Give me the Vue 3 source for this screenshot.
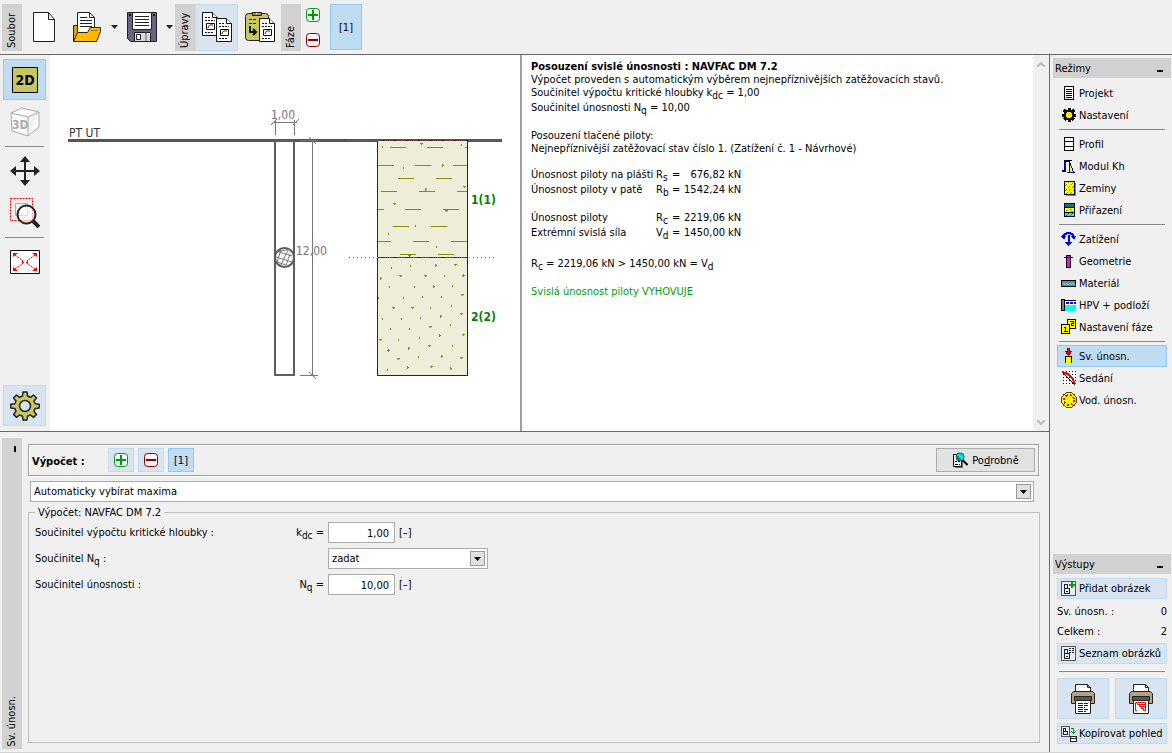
<script setup>
import { ref } from 'vue'

const icons = {
  project: '<path d="M3.500 1.500h9v13h-9z" fill="#fff" stroke="#000"/><path d="M5 4.500h6M5 6.500h6M5 8.500h6M5 10.500h6M5 12.500h6" stroke="#000"/>',
  settings: '<path d="M8 1v14M1 8h14M3 3l10 10M13 3l-10 10" stroke="#111" stroke-width="3"/><circle cx="8" cy="8" r="5" fill="#111"/><circle cx="8" cy="8" r="3" fill="#ffeb00"/>',
  profile: '<path d="M3.500 1.500h9v13h-9zM3 5.500h10M3 10.500h10" fill="#fff" stroke="#000"/>',
  modulus: '<path d="M1 13h3V3h5" fill="none" stroke="#000080" stroke-width="2"/><path d="M5 2.500h6" stroke="#000"/><path d="M8.500 4v10h4z" fill="#ff0" stroke="#000080"/><path d="M6 14.500h8" stroke="#000080"/>',
  soils: '<path d="M5 3h10v13h-10z" fill="#888"/><path d="M3.500 1.500h10v13h-10z" fill="#ff0" stroke="#000"/><path d="M4 6l4-4M4 11l8-8M5 14l8-8M9 14l4-4" stroke="#7d7d00" stroke-dasharray="3 1"/>',
  assign: '<path d="M3 1h11v14h-11z" fill="#000"/><path d="M4 2h9v3h-9z" fill="#008080"/><path d="M4 6h9v4h-9z" fill="#ff0"/><path d="M4 11h9v3h-9z" fill="#0ff"/><path d="M5 8.500h2M9 7.500h2M10 9.500h2" stroke="#a90"/><path d="M5 14l3-3M9 14l3-3M5 5l2-2M9 5l2-2" stroke="#055"/>',
  load: '<path d="M2 6c1-5 10-5 11 0M7.500 4v9" fill="none" stroke="#00f" stroke-width="2"/><path d="M0 5h5l-2 4zM10 5h5l-2 4zM4 11h7l-3.500 4z" fill="#00f"/>',
  geometry: '<path d="M5.500 2.500h4v12h-4z" fill="#f0f" stroke="#000"/><path d="M3 4.500h9" stroke="#000"/>',
  material: '<path d="M.5 5.500h14v6h-14z" fill="#808080" stroke="#000"/><path d="M2 8.500h12M3 9.500h11" stroke="#0ff" stroke-dasharray="2 1"/>',
  water: '<path d="M4 8h11v6h-11z" fill="#0ff"/><path d="M4 5h11v3h-11z" fill="#fff"/><path d="M.5 2.500h3v11h-3z" fill="#808080" stroke="#000"/><path d="M3 3.500h12" stroke="#000"/><path d="M5 6h10" stroke="#00f" stroke-width="2" stroke-dasharray="3 1"/>',
  stage: '<rect x="6.500" y=".5" width="8" height="9" rx="1" fill="#ff0" stroke="#000"/><rect x=".5" y="5.500" width="8" height="9" rx="1" fill="#ff0" stroke="#000"/><path d="M9 2.500h3v2h-2v2h3" fill="none" stroke="#000"/><path d="M3 8.500h1.500v4M3 12.500h4" fill="none" stroke="#000"/>',
  vertical: '<path d="M4.500 15V8.500h6V15" fill="#ff0" stroke="#000"/><path d="M6.500.5h2v3h2l-3 4-3-4h2z" fill="#f00" stroke="#900"/>',
  settlement: '<path d="M1 1h14v14h-14z" fill="#fff"/><path d="M2 1.500h13M2 4.500h13M2 7.500h13M2 10.500h13M2 13.500h13" stroke="#000" stroke-dasharray="1 2"/><path d="M1 2l13 13" stroke="#000"/><path d="M1 2c7 1 11 6 13 12" fill="none" stroke="#f00" stroke-width="2"/>',
  horizontal: '<circle cx="8" cy="8" r="7.500" fill="#ff0" stroke="#554400"/><circle cx="8" cy="8" r="5" fill="none" stroke="#f00" stroke-width="2" stroke-dasharray="2 1.930"/>',
  addPicture: '<path d="M.5.5h14v14h-14z" fill="#e7edf3" stroke="#555"/><path d="M3.500 12.500v-9h3v4h2v5zM3.500 7.500h3M5 10.500h2" fill="none" stroke="#222"/><path d="M11 1v6M8 4h6" stroke="#00a000" stroke-width="2"/>',
  listPictures: '<path d="M.5.5h14v14h-14z" fill="#e7edf3" stroke="#555"/><path d="M3.500 12.500v-9h3v4h2v5zM3.500 7.500h3M5 10.500h2" fill="none" stroke="#222"/><path d="M8 2.500h6M8 4.500h6M8 6.500h6" stroke="#222" stroke-dasharray="2 1"/>',
  copyView: '<path d="M.5.5h8v10h-8z" fill="#e7edf3" stroke="#555"/><path d="M2.500 8.500v-6h2v3h2v3zM2.500 5.500h2" fill="none" stroke="#222"/><path d="M10 2.500h2.500v5M10.500 5.500l2 2 2-2" fill="none" stroke="#00a000"/><path d="M9.500 10.500h6v5h-6zM9 12.500h7" fill="#fff" stroke="#222"/>',
}

const modeGroups = [
  [['project', 'Projekt'], ['settings', 'Nastavení']],
  [['profile', 'Profil'], ['modulus', 'Modul Kh'], ['soils', 'Zeminy'], ['assign', 'Přiřazení']],
  [['load', 'Zatížení'], ['geometry', 'Geometrie'], ['material', 'Materiál'], ['water', 'HPV + podloží'], ['stage', 'Nastavení fáze']],
  [['vertical', 'Sv. únosn.'], ['settlement', 'Sedání'], ['horizontal', 'Vod. únosn.']],
]
const activeMode = ref('vertical')

const kdc = ref('1,00')
const nq = ref('10,00')

// Clay hatch: y, then start/end pairs
const clay = [
  [147, 390, 406, 427, 443, 465, 467], [165, 378, 394, 415, 431, 453, 467],
  [178, 398, 414, 436, 452], [191, 381, 397, 419, 435, 457, 467],
  [209, 378, 384, 405, 421, 443, 459], [226, 393, 409, 431, 447],
  [241, 378, 391, 413, 429, 451, 467], [254, 400, 416, 438, 454],
]
const clayPath = clay.map(([y, ...xs]) => {
  let d = ''
  for (let i = 0; i < xs.length; i += 2) d += `M${xs[i]} ${y + 0.5}H${xs[i + 1]}`
  return d
}).join('')

// Grains: x, y, shape (i = tick, t = wedge, h = side wedge, o = ring)
const grains = [
  [382, 146, 'i'], [421, 143, 't'], [461, 144, 'i'], [403, 167, 'i'], [442, 165, 'h'],
  [425, 189, 'h'], [464, 186, 't'], [394, 203, 't'], [446, 210, 't'], [415, 225, 'i'],
  [388, 233, 'i'], [436, 246, 'i'], [409, 255, 't'],
  [391, 267, 'i'], [410, 265, 'i'], [435, 265, 'h'], [455, 264, 't'],
  [380, 278, 'h'], [400, 275, 't'], [425, 275, 't'], [444, 275, 'i'], [463, 275, 'o'],
  [389, 286, 'i'], [414, 286, 'i'], [433, 286, 'h'], [452, 285, 'i'],
  [378, 297, 'i'], [403, 297, 'i'], [422, 296, 'i'], [441, 296, 'i'], [462, 294, 't'],
  [393, 307, 't'], [412, 307, 't'], [430, 307, 'i'], [451, 305, 'i'], [461, 313, 't'],
  [382, 318, 'i'], [401, 318, 'i'], [420, 317, 'i'], [440, 316, 'h'],
  [390, 328, 'i'], [409, 328, 'i'], [430, 326, 't'], [450, 324, 'i'],
  [380, 339, 't'], [398, 339, 'i'], [419, 337, 'i'], [439, 335, 'h'], [463, 334, 't'],
  [388, 350, 'o'], [408, 348, 'h'], [429, 345, 't'], [452, 345, 'i'],
  [398, 358, 't'], [418, 356, 'i'], [441, 356, 'h'], [461, 357, 't'],
  [387, 369, 'i'], [407, 367, 'h'], [431, 366, 't'], [450, 368, 'h'],
]
const shapes = {
  i: 'h1v2h-1z',
  t: 'm-1 0h3v1h-1v1h-1v-1h-1z',
  h: 'm0 -1h1v1h1v1h-1v1h-1z',
  o: 'm0 -1h1v1h1v1h-1v1h-1v-1h-1v-1h1z',
}
const grainPath = grains.map(([x, y, s]) => `M${x} ${y}${shapes[s]}`).join('')
</script>

<template>
  <div class="app">
    <header class="toolbar">
      <span class="tab">Soubor</span>
      <button class="tool doc" aria-label="Nový">
        <svg width="30" height="30" viewBox="0 0 30 30"><path d="M4.500.5h15l6 7v22h-21z" fill="#fff" stroke="#222" /><path d="M19.500.5v7h6" fill="none" stroke="#222" /></svg>
      </button>
      <button class="tool" aria-label="Otevřít">
        <svg width="30" height="30" viewBox="0 0 30 30">
          <path d="M1.500 29V13.500h5l2 3h14V29z" fill="#e8a200" stroke="#222" />
          <path d="M5.500 21V.5h12l5 5V21z" fill="#fff" stroke="#222" /><path d="M17.500.5v5h5M8 5.500h7M8 8.500h12M8 11.500h12M8 14.500h12" fill="none" stroke="#222" />
          <path d="M1.500 29.500l4-9h10l3-5h10v4l-4 10z" fill="#ffb900" stroke="#222" /><path d="M19 18.500h7" stroke="#a66f00" />
        </svg>
      </button>
      <button class="drop" aria-label="Otevřít – nabídka"><svg width="7" height="4" viewBox="0 0 7 4"><path d="M0 0h7l-3.500 4z" fill="#222" /></svg></button>
      <button class="tool" aria-label="Uložit">
        <svg width="30" height="30" viewBox="0 0 30 30">
          <path d="M.5.5h29v29h-26l-3-3z" fill="#65657f" stroke="#222" />
          <path d="M5.500.5h19v17h-19z" fill="#fff" stroke="#222" /><path d="M8 4.500h14M8 7.500h14M8 10.500h14M8 13.500h14" stroke="#222" />
          <path d="M2 2h2v2h-2zM26 2h2v2h-2z" fill="#111" />
          <path d="M7.500 20.500h16v9h-16z" fill="#d8d8de" stroke="#222" /><path d="M9.500 22.500h4v5h-4z" fill="#fff" stroke="#222" /><path d="M19 21v8" stroke="#666" />
        </svg>
      </button>
      <button class="drop" aria-label="Uložit – nabídka"><svg width="7" height="4" viewBox="0 0 7 4"><path d="M0 0h7l-3.500 4z" fill="#222" /></svg></button>
      <span class="tab">Úpravy</span>
      <button class="tool soft" aria-label="Kopírovat">
        <svg width="30" height="30" viewBox="0 0 30 30">
          <g id="sheet" fill="#fff" stroke="#111">
            <path d="M.5.5h10l5 5v18h-15z" /><path d="M10.500.5v5h5" /><path d="M3 5.500h6M3 8.500h10M3 20.500h9" stroke-dasharray="2 1" /><path d="M4.500 11.500h8v6h-8z" /><path d="M6 16c1-4 3-3 5-3" />
          </g>
          <use href="#sheet" x="14" y="6" />
        </svg>
      </button>
      <button class="tool" aria-label="Vložit">
        <svg width="30" height="30" viewBox="0 0 30 30">
          <path d="M.5 4.500q0-3 3-3h17q3 0 3 3v21q0 3-3 3h-17q-3 0-3-3z" fill="#c8c65e" stroke="#222" />
          <path d="M7.500 3.500v-3h9v3z" fill="#b98550" stroke="#222" /><path d="M11 1h2v1h-2z" fill="#fff" />
          <path d="M4 7.500h8M4 11.500h7" stroke="#222" stroke-dasharray="3 1" /><path d="M5 14v6h5M8 17l3 3-3 3" fill="none" stroke="#111" stroke-width="2" />
          <use href="#sheet" x="14" y="6" />
        </svg>
      </button>
      <span class="tab">Fáze</span>
      <div class="stage-edit">
        <button aria-label="Přidat fázi"><svg width="14" height="14" viewBox="0 0 14 14"><rect x=".5" y=".5" width="13" height="13" rx="3" fill="#f4fbf4" stroke="#009a12" /><path d="M7 2v10M2 7h10" stroke="#009a12" stroke-width="2" /></svg></button>
        <button aria-label="Odebrat fázi"><svg width="14" height="14" viewBox="0 0 14 14"><rect x=".5" y=".5" width="13" height="13" rx="3" fill="#fbf4f4" stroke="#900000" /><path d="M2 7h10" stroke="#900000" stroke-width="2" /></svg></button>
      </div>
      <button class="stage on">[1]</button>
    </header>

    <div class="body">
      <main class="work">
        <section class="view">
          <nav class="side-tools">
            <button class="side on" aria-label="2D"><svg width="26" height="26" viewBox="0 0 26 26"><path d="M.5.500h25v25h-25z" fill="#c8c65e" stroke="#000" /><text x="13" y="18" text-anchor="middle" class="t2d">2D</text></svg></button>
            <button class="side" aria-label="3D"><svg width="30" height="30" viewBox="0 0 30 30"><path d="M1 6l17 4v19L2 24zM1 6l11-5 17 4-11 5M29 5v15l-11 9" fill="#fbfbfb" stroke="#aaa" stroke-linejoin="round" /><text x="2" y="22" class="t3d">3D</text></svg></button>
            <hr />
            <button class="side" aria-label="Posun"><svg width="30" height="30" viewBox="0 0 30 30"><path d="M15 3v24M3 15h24" stroke="#222" stroke-width="2" /><path d="M15 0l5 6h-10zM15 30l5-6h-10zM0 15l6-5v10zM30 15l-6-5v10z" fill="#222" /></svg></button>
            <button class="side" aria-label="Zvětšit výřez"><svg width="30" height="30" viewBox="0 0 30 30"><path d="M.5.5h22v22h-22z" fill="none" stroke="#f00" stroke-dasharray="2 1" /><path d="M5.500 5.500h12v12h-12z" fill="none" stroke="#aaa" /><circle cx="16.500" cy="16.500" r="9" fill="#fff" fill-opacity=".6" stroke="#222" stroke-width="2" /><path d="M23 23l6 6" stroke="#222" stroke-width="4" /></svg></button>
            <hr />
            <button class="side fit" aria-label="Celý výkres"><svg width="30" height="24" viewBox="0 0 30 24"><path d="M.5.5h29v23h-29z" fill="#fff" stroke="#111" /><path d="M5 5l7 5M25 5l-7 5M5 19l7-5M25 19l-7-5" stroke="#f00" stroke-dasharray="2 1" /><path d="M12.500 10v4M17.500 10v4M12 12.500h2M16 12.500h2" stroke="#f00" /><path d="M3 3h5l-5 4zM27 3h-5l5 4zM3 21h5l-5-4zM27 21h-5l5-4z" fill="#f00" /></svg></button>
            <button class="side soft gear" aria-label="Nastavení kreslení"><svg width="30" height="30" viewBox="0 0 30 30"><path d="M12.500 5l.5-4h4l.5 4 3 1.300L23.500 4l3 3-2.500 3 1.200 2.800 4 .5v3.600l-4 .5-1.200 3 2.500 3-3 3-3-2.500-3 1.300-.5 3.800h-4l-.5-3.800-3-1.300-3 2.500-3-3 2.500-3L4.800 17.400l-4-.5v-3.600l4-.5L6 10 3.500 7l3-3 3 2.300z" fill="#c8c65e" stroke="#222" stroke-width="1.500" stroke-linejoin="round" /><circle cx="15" cy="15" r="5.500" fill="#d8e5f0" stroke="#222" stroke-width="1.500" /></svg></button>
          </nav>

          <div class="canvas">
            <svg class="drawing" viewBox="50 55 470 376" preserveAspectRatio="xMinYMin meet">
              <g shape-rendering="crispEdges">
                <path d="M68 139h434v3h-434z" fill="#555" />
                <path d="M275 141h19v234h-19z" fill="#fff" stroke="#5e5e5e" stroke-width="2" />
                <path d="M275.500 120v15M294.500 120v15M273 122.500h24M312.500 140v236M300 140.500h18M300 375.500h18" stroke="#777" fill="none" />
                <path d="M377 140h91v236h-91z" fill="#eeedd9" />
                <path :d="clayPath" stroke="#8c8c00" fill="none" />
                <path :d="grainPath" fill="#8c8c00" />
                <path d="M377.500 140.500h90v235h-90zM377 257.500h91" fill="none" stroke="#800000" />
                <path d="M349 140.500h145M349 257.500h145" stroke="#8c8c00" stroke-dasharray="1 3" />
                <path d="M378 257.500h89M378 140.500h89" stroke="#444" stroke-dasharray="4 2" />
              </g>
              <path d="M271 125l6-6M293 125l6-6M309 137l7 7M309 372l7 7" stroke="#777" />
              <circle cx="284.500" cy="257.500" r="9.500" fill="#fff" stroke="#5a5a5a" stroke-width="2" />
              <path d="M277 252l13-3M276 257l16 5M281 250l-4 12M279 252l13 4M288 250l-7 15M277 262l9 3M290 254l-4 11" stroke="#777" fill="none" />
              <text x="69" y="137" class="dark">PT UT</text>
              <text x="271" y="119" class="dim">1,00</text>
              <text x="296" y="255" class="dim">12,00</text>
              <text x="471" y="204" class="layer">1(1)</text>
              <text x="471" y="321" class="layer">2(2)</text>
            </svg>
          </div>

          <article class="report">
            <div class="text">
              <h1>Posouzení svislé únosnosti : NAVFAC DM 7.2</h1>
              <p>Výpočet proveden s automatickým výběrem nejnepříznivějších zatěžovacích stavů.</p>
              <p class="ix">Součinitel výpočtu kritické hloubky k<sub>dc</sub> = 1,00</p>
              <p class="ix">Součinitel únosnosti N<sub>q</sub> = 10,00</p>
              <p class="gap">Posouzení tlačené piloty:</p>
              <p>Nejnepříznivější zatěžovací stav číslo 1. (Zatížení č. 1 - Návrhové)</p>
              <table class="gap">
                <tbody>
                  <tr><td>Únosnost piloty na plášti</td><td>R<sub>s</sub></td><td>=</td><td>676,82</td><td>kN</td></tr>
                  <tr><td>Únosnost piloty v patě</td><td>R<sub>b</sub></td><td>=</td><td>1542,24</td><td>kN</td></tr>
                </tbody>
                <tbody>
                  <tr class="apart"><td>Únosnost piloty</td><td>R<sub>c</sub></td><td>=</td><td>2219,06</td><td>kN</td></tr>
                  <tr><td>Extrémní svislá síla</td><td>V<sub>d</sub></td><td>=</td><td>1450,00</td><td>kN</td></tr>
                </tbody>
              </table>
              <p class="ix check">R<sub>c</sub> = 2219,06 kN &gt; 1450,00 kN = V<sub>d</sub></p>
              <p class="gap ok">Svislá únosnost piloty VYHOVUJE</p>
            </div>
            <div class="scroll">
              <svg width="8" height="5" viewBox="0 0 8 5"><path d="M0 5l4-4 4 4" fill="none" stroke="#bbb" stroke-width="2" /></svg>
              <svg width="8" height="5" viewBox="0 0 8 5"><path d="M0 0l4 4 4-4" fill="none" stroke="#bbb" stroke-width="2" /></svg>
            </div>
          </article>
        </section>

        <section class="panel">
          <div class="panel-tab"><i></i><span>Sv. únosn.</span></div>
          <div class="panel-main">
            <div class="calc">
              <b>Výpočet :</b>
              <button class="sq soft" aria-label="Přidat výpočet"><svg width="14" height="14" viewBox="0 0 14 14"><rect x=".5" y=".5" width="13" height="13" rx="3" fill="#f4fbf4" stroke="#009a12" /><path d="M7 2v10M2 7h10" stroke="#009a12" stroke-width="2" /></svg></button>
              <button class="sq soft" aria-label="Odebrat výpočet"><svg width="14" height="14" viewBox="0 0 14 14"><rect x=".5" y=".5" width="13" height="13" rx="3" fill="#fbf4f4" stroke="#900000" /><path d="M2 7h10" stroke="#900000" stroke-width="2" /></svg></button>
              <button class="sq on">[1]</button>
              <button class="detail">
                <svg width="16" height="16" viewBox="0 0 16 16"><path d="M3 4h8v12h-8z" fill="#777" /><path d="M1.500 2.500h8v12h-8z" fill="#fff" stroke="#000" /><path d="M3 9.500h2M6 9.500h2M3 12.500h3M7 12.500h1" stroke="#000" /><circle cx="8" cy="5" r="4" fill="#0ee" stroke="#055" /><path d="M6 4v3h3" fill="none" stroke="#022" /><path d="M8 3.500h2" stroke="#c66" /><path d="M10.500 8l5 5" stroke="#000" stroke-width="2" /></svg>
                <span>Po<u>d</u>robně</span>
              </button>
            </div>
            <div class="combo wide">
              <select aria-label="Způsob výběru"><option>Automaticky vybírat maxima</option></select>
              <span class="arrow"><svg width="7" height="4" viewBox="0 0 7 4"><path d="M0 0h7l-3.500 4z" /></svg></span>
            </div>
            <fieldset>
              <legend>Výpočet: NAVFAC DM 7.2</legend>
              <div class="row">
                <label for="kdc">Součinitel výpočtu kritické hloubky :</label>
                <span class="sym">k<sub>dc</sub> =</span>
                <input id="kdc" v-model="kdc" type="text" />
                <span>[–]</span>
              </div>
              <div class="row">
                <label for="nqMode">Součinitel N<sub>q</sub> :</label>
                <span class="sym"></span>
                <div class="combo">
                  <select id="nqMode"><option>zadat</option></select>
                  <span class="arrow"><svg width="7" height="4" viewBox="0 0 7 4"><path d="M0 0h7l-3.500 4z" /></svg></span>
                </div>
              </div>
              <div class="row">
                <label for="nq">Součinitel únosnosti :</label>
                <span class="sym">N<sub>q</sub> =</span>
                <input id="nq" v-model="nq" type="text" />
                <span>[–]</span>
              </div>
            </fieldset>
          </div>
        </section>
      </main>

      <aside class="sidebar">
        <h2>Režimy<i></i></h2>
        <nav class="modes">
          <template v-for="(group, g) in modeGroups" :key="g">
            <hr v-if="g" />
            <button v-for="[icon, label] in group" :key="icon" class="mode" :class="{ on: icon === activeMode }" @click="activeMode = icon">
              <svg width="16" height="16" viewBox="0 0 16 16" v-html="icons[icon]"></svg>{{ label }}
            </button>
          </template>
        </nav>

        <h2 class="outputs">Výstupy<i></i></h2>
        <div class="out">
          <button class="wide-btn soft"><svg width="16" height="16" viewBox="0 0 16 16" v-html="icons.addPicture"></svg>Přidat obrázek</button>
          <p><span>Sv. únosn. :</span><span>0</span></p>
          <p><span>Celkem :</span><span>2</span></p>
          <button class="wide-btn soft"><svg width="16" height="16" viewBox="0 0 16 16" v-html="icons.listPictures"></svg>Seznam obrázků</button>
          <hr />
          <div class="prints">
            <button class="soft" aria-label="Tisk protokolu">
              <svg width="24" height="30" viewBox="0 0 24 30"><path d="M4.500 10V.5h12l3 3V10z" fill="#fff" stroke="#222" /><path d="M16.500.5v3h3" fill="none" stroke="#222" /><path d="M.5 19.500v-10l2-2h19l2 2v10z" fill="#b4a283" stroke="#222" /><path d="M3.500 12.500h17v4h-17z" fill="#555" stroke="#222" /><path d="M4.500 16.500h15v13h-15z" fill="#fff" stroke="#222" /><path d="M7 19.500h10M7 21.500h10M7 23.500h7M7 25.500h10M7 27.500h8" stroke="#222" stroke-dasharray="5 1" /></svg>
            </button>
            <button class="soft" aria-label="Tisk obrázku">
              <svg width="24" height="30" viewBox="0 0 24 30"><path d="M4.500 10V.5h12l3 3V10z" fill="#fff" stroke="#222" /><path d="M16.500.5v3h3" fill="none" stroke="#222" /><path d="M.5 19.500v-10l2-2h19l2 2v10z" fill="#b4a283" stroke="#222" /><path d="M3.500 12.500h17v4h-17z" fill="#555" stroke="#222" /><path d="M4.500 16.500h15v13h-15z" fill="#fff" stroke="#222" /><path d="M8 18.500h-1.500v8h1.500M8.500 18.500h8v8h-2v-2h-2v-2h-2v-2h-2zM11 20.500h5M13 22.500h3" fill="none" stroke="#f00" /></svg>
            </button>
          </div>
          <button class="wide-btn soft"><svg width="16" height="16" viewBox="0 0 16 16" v-html="icons.copyView"></svg>Kopírovat pohled</button>
        </div>
      </aside>
    </div>
  </div>
</template>

<style>
body { margin: 0; background: #f0f0f0; }
</style>

<style scoped>
.app {
  display: flex; flex-direction: column; box-sizing: border-box; min-height: 100vh;
  border-bottom: 1px solid #d1d1d1; background: #f0f0f0; color: #000;
  font: 11px/13px "DejaVu Sans Condensed", "DejaVu Sans", sans-serif;
}
.app *, .app *::before { box-sizing: border-box; }
button { font: inherit; color: inherit; padding: 0; margin: 0; border: 1px solid transparent; background: none; display: flex; align-items: center; justify-content: center; }
svg { display: block; flex: none; }
p, h1, h2 { margin: 0; font: inherit; }
hr { margin: 0; border: 0; height: 1px; background: #888; width: 100%; }
sub { font-size: 10px; line-height: 0; vertical-align: -3px; }
.soft { background: #d8e5f0; border-color: #c0dcf3; }
.on { background: #c0dcf3; border-color: #90c8f6; }

.toolbar { display: flex; align-items: center; height: 55px; padding: 0 2px; border-bottom: 1px solid #696969; }
.tab { writing-mode: vertical-rl; transform: rotate(180deg); width: 20px; height: 47px; line-height: 20px; padding-top: 3px; background: #d1d1d1; }
.tool { width: 43px; height: 47px; }
.drop { width: 12px; height: 47px; }
.stage-edit { display: flex; flex-direction: column; gap: 10px; width: 29px; padding-left: 5px; }
.stage-edit button { width: 14px; height: 15px; border: 0; }
.stage { width: 32px; height: 46px; }

.body { flex: 1; display: flex; }
.work { flex: 1; min-width: 0; display: flex; flex-direction: column; border-right: 1px solid #696969; }
.view { flex: 377 0 0; display: grid; grid-template-columns: 50px 472fr 527fr; border-bottom: 1px solid #696969; }
.side-tools { display: flex; flex-direction: column; align-items: center; padding: 4px 4px 5px 3px; }
.side { width: 43px; height: 41px; flex: none; }
.side + .side { margin-top: 1px; }
.side-tools hr { width: 39px; margin: 4px 0 3px; }
.side.fit { height: 42px; }
.side.gear { margin-top: auto; }
.t2d { font: bold 14px "DejaVu Sans Condensed", sans-serif; }
.t3d { font: bold 12px "DejaVu Sans Condensed", sans-serif; fill: #aaa; }
.canvas { background: #fff; border-right: 2px solid #a0a0a0; }
.drawing { width: 100%; }
.dark { font-size: 12px; fill: #333; }
.dim { font-size: 12px; fill: #777; }
.layer { font-size: 12px; font-weight: bold; fill: #008000; }

.report { background: #fff; display: flex; min-width: 0; }
.text { flex: 1; padding: 5px 0 0 9px; white-space: nowrap; }
h1 { font-weight: bold; }
.ix { padding-bottom: 2px; }
.gap { margin-top: 13px; }
table { border-collapse: collapse; }
td { padding: 0 0 2px; }
td:nth-child(1) { width: 125px; }
td:nth-child(2) { width: 16px; }
td:nth-child(3) { width: 9px; }
td:nth-child(4) { width: 44px; text-align: right; }
td:nth-child(5) { padding-left: 3px; }
.apart td { padding-top: 13px; }
.check { margin-top: 16px; }
.ok { color: #00a000; }
.scroll { width: 16px; background: #f0f0f0; display: flex; flex-direction: column; justify-content: space-between; align-items: center; padding: 7px 0 6px; }

.panel { flex: 320 0 0; display: flex; gap: 6px; padding: 6px 9px 3px 2px; }
.panel-tab { width: 20px; background: #d1d1d1; display: flex; flex-direction: column; justify-content: space-between; align-items: center; padding: 8px 0 2px; }
.panel-tab i { width: 2px; height: 6px; background: #000; margin-left: 6px; }
.panel-tab span { writing-mode: vertical-rl; transform: rotate(180deg); line-height: 20px; }
.panel-main { flex: 1; display: flex; flex-direction: column; padding: 6px 0; }
.calc { display: flex; align-items: center; gap: 4px; height: 32px; margin-right: 1px; padding: 0 3px; border: 1px solid #a0a0a0; box-shadow: 1px 1px #fff, inset 1px 1px #fff; }
.calc b { width: 72px; padding-top: 3px; }
.sq { width: 26px; height: 24px; }
.detail { margin-left: auto; width: 99px; height: 24px; gap: 4px; background: #e1e1e1; border-color: #adadad; }
.combo { position: relative; width: 160px; height: 21px; }
.wide { width: auto; margin: 5px 6px 0 2px; }
select { appearance: none; width: 100%; height: 21px; padding: 0 3px; border: 1px solid #ababab; border-radius: 0; background: #fff; color: #000; font: inherit; }
.arrow { position: absolute; right: 3px; top: 3px; width: 15px; height: 15px; border: 1px solid #999; background: #e1e1e1; display: flex; align-items: center; justify-content: center; pointer-events: none; }
fieldset { flex: 1; min-width: 0; margin: 4px 0 0; padding: 3px 6px 0; border: 1px solid #c0c0c0; }
legend { padding: 0 3px; }
.row { display: flex; align-items: center; gap: 4px; height: 21px; margin-bottom: 5px; }
.row label { width: 220px; }
.sym { width: 65px; text-align: right; }
input { width: 67px; height: 21px; padding: 1px 5px 0; border: 1px solid #ababab; background: #fff; color: #000; font: inherit; text-align: right; }

.sidebar { width: 122px; display: flex; flex-direction: column; padding: 3px 1px 8px 3px; }
h2 { display: flex; justify-content: space-between; height: 20px; line-height: 21px; padding: 0 8px 0 2px; background: #d1d1d1; }
h2 i { width: 6px; height: 2px; margin-top: 12px; background: #000; }
.modes { padding: 4px 4px 0; }
.modes hr { margin: 3px 2px; width: auto; }
.mode { width: 100%; height: 22px; justify-content: flex-start; gap: 2px; padding: 0 3px; }
.mode svg, .wide-btn svg { shape-rendering: crispEdges; }
.outputs { margin-top: auto; }
.out { padding: 4px 4px 0; display: flex; flex-direction: column; }
.wide-btn { height: 21px; justify-content: flex-start; gap: 2px; padding: 0 3px; white-space: nowrap; }
.out p { display: flex; justify-content: space-between; height: 20px; line-height: 20px; }
.out p:first-of-type { margin-top: 3px; }
.out p + .wide-btn { margin-top: 1px; }
.out hr { margin: 7px 2px 6px; width: auto; }
.prints { display: flex; gap: 6px; margin-bottom: 4px; }
.prints button { flex: 1; height: 41px; }
</style>
